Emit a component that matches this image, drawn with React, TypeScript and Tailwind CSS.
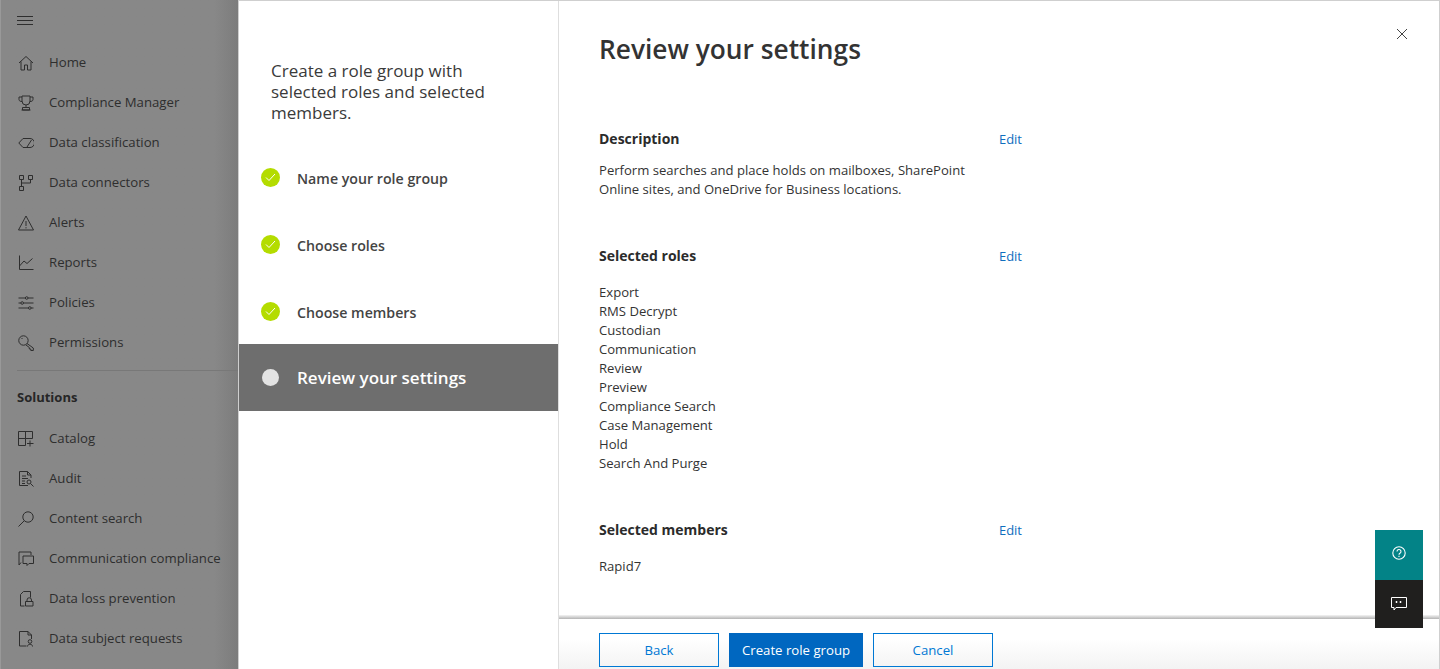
import React from "react";

const font = "font-['Open_Sans','Noto_Sans',sans-serif]";

type IconProps = { children: React.ReactNode };

function NavIcon({ children }: IconProps) {
  return (
    <svg width="16" height="16" viewBox="0 0 16 16" fill="none" stroke="currentColor" strokeWidth="1" className="shrink-0">
      {children}
    </svg>
  );
}

const navTop = [
  { label: "Home", icon: <path d="M1 8 8 1.500 15 8M3 6.500V15h3.500v-5h3v5H13V6.500" /> },
  {
    label: "Compliance Manager",
    icon: (
      <path d="M4 1h8v5a4 4 0 0 1-8 0V1ZM4 2H1v2.500C1 6 2.500 6.500 4 6.500M12 2h3v2.500c0 1.500-1.500 2-3 2M8 10v2.500M4.500 15v-2.500h7V15ZM3.500 15h9" />
    ),
  },
  {
    label: "Data classification",
    icon: <path d="M.8 8 5 3.500h7a3.500 3.500 0 0 1 0 9H5L.8 8ZM9 12l4.500-7" />,
  },
  {
    label: "Data connectors",
    icon: (
      <path d="M1.500.5h4v4h-4ZM10.500.5h4v4h-4ZM1.500 11.500h4v4h-4ZM3.500 4.500v7M3.500 8h9V4.500" />
    ),
  },
  {
    label: "Alerts",
    icon: <path d="M8 1 15.500 15H.5L8 1ZM8 6v5M8 12.200v1.200" />,
  },
  { label: "Reports", icon: <path d="M1.500.5v14h14M1.500 11 6 6l3 2.500 5.500-5" /> },
  {
    label: "Policies",
    icon: (
      <g>
        <path d="M.5 3h7M10 3h5.500M.5 8h2.500M5.500 8h10M.5 13h10M13 13h2.500" />
        <circle cx="8.700" cy="3" r="1.300" />
        <circle cx="4.200" cy="8" r="1.300" />
        <circle cx="11.800" cy="13" r="1.300" />
      </g>
    ),
  },
  {
    label: "Permissions",
    icon: <path d="M5.500.8a4.700 4.700 0 1 1-.1 9.400 4.700 4.700 0 0 1 .1-9.400ZM9 8.500l6.300 4.500v2.500h-2.500v-1.500h-1.500v-1.500L8 10M3.500 3.500h1" />,
  },
];

const navSolutions = [
  {
    label: "Catalog",
    icon: <path d="M.5.5h14v7h-7v7h-7ZM7.500.5v7M.5 7.500h7M12 9.500v6M9 12.500h6.500" />,
  },
  {
    label: "Audit",
    icon: (
      <g>
        <path d="M10 14.500H1.500V.5h8l3.500 3.500v3M9.500.5V4H13M4 5h4M4 7.500h6M4 10h3M4 12.500h3" />
        <circle cx="11" cy="11" r="2" />
        <path d="m12.500 12.500 3 3" />
      </g>
    ),
  },
  {
    label: "Content search",
    icon: (
      <g>
        <circle cx="10" cy="6" r="5.200" />
        <path d="M6.300 9.700.5 15.500" />
      </g>
    ),
  },
  {
    label: "Communication compliance",
    icon: <path d="M1 11V1h12v3M5 5h10.500v7.500H11l-2 2v-2H5ZM1 11v3l2-2.500" />,
  },
  {
    label: "Data loss prevention",
    icon: <path d="M6.500 15H2.500V3.500L5.500.5h7v6M7.500 10.500h7.500V15H7.500ZM9 10.500V9a2.200 2.200 0 0 1 4.500 0v1.500" />,
  },
  {
    label: "Data subject requests",
    icon: (
      <g>
        <path d="M8.500 15H1.500V.5H10L13.500 4v4M10 .5V4h3.500" />
        <circle cx="12" cy="10.500" r="1.800" />
        <path d="M9.500 15.500c0-3 5-3 5 0" />
      </g>
    ),
  },
];

function NavRow({ label, icon }: { label: string; icon: React.ReactNode }) {
  return (
    <div className="flex h-10 items-center gap-[15px] pl-[17px] text-[#2e2e2e]">
      <NavIcon>{icon}</NavIcon>
      <span className="whitespace-nowrap text-[13.2px]">{label}</span>
    </div>
  );
}

function Step({ label }: { label: string }) {
  return (
    <div className="flex h-[67px] items-center pl-[22px]">
      <span className="-mt-[3px] flex h-[19px] w-[19px] items-center justify-center rounded-full bg-[#b4dc00]">
        <svg width="11" height="9" viewBox="0 0 11 9" fill="none" stroke="#fff" strokeWidth="1">
          <path d="M1 4.500 4 7.500 10 1" />
        </svg>
      </span>
      <span className="ml-[17px] text-[14.2px] font-semibold text-[#444]">{label}</span>
    </div>
  );
}

function Section({ title, children }: { title: string; children: React.ReactNode }) {
  return (
    <section>
      <div className="flex h-5 w-[423px] items-center justify-between">
        <h2 className="text-sm font-bold text-[#2b2b2b]">{title}</h2>
        <a className="pt-px text-[13px] text-[#106ebe]">Edit</a>
      </div>
      {children}
    </section>
  );
}

const roles = [
  "Export",
  "RMS Decrypt",
  "Custodian",
  "Communication",
  "Review",
  "Preview",
  "Compliance Search",
  "Case Management",
  "Hold",
  "Search And Purge",
];

export default function App() {
  return (
    <div className={`relative flex h-[669px] w-[1440px] overflow-hidden bg-white ${font}`}>
      {/* dimmed nav behind the panel */}
      <aside className="h-full w-[238px] shrink-0 border-l border-[#999] bg-gradient-to-r from-[#888] from-[90%] to-[#7c7c7c]">
        <div className="flex h-[43px] items-center pb-[2px] pl-4 text-[#2e2e2e]">
          <svg width="16" height="10" viewBox="0 0 16 10" stroke="currentColor" strokeWidth="1">
            <path d="M0 .5h16M0 4.500h16M0 8.500h16" />
          </svg>
        </div>
        {navTop.map((n) => (
          <NavRow key={n.label} {...n} />
        ))}
        <div className="ml-4 mt-[7px] border-t border-[#787878]" />
        <div className="flex h-[46px] items-center pl-4 pt-2 text-[13px] font-bold text-[#262626]">Solutions</div>
        <div className="mt-[2px]">
          {navSolutions.map((n) => (
            <NavRow key={n.label} {...n} />
          ))}
        </div>
      </aside>

      {/* wizard panel */}
      <div className="flex h-full flex-1 border-r border-t border-l border-[#cfcfcf]">
        <div className="h-full w-[320px] shrink-0 border-r border-[#dedede]">
          <p className="w-[240px] pl-8 pt-[59px] text-[17px] leading-[21px] text-[#3a3a3a] box-content">
            Create a role group with selected roles and selected members.
          </p>
          <div className="mt-[22px]">
            <Step label="Name your role group" />
            <Step label="Choose roles" />
            <Step label="Choose members" />
            <div className="-mt-[2px] flex h-[67px] items-center bg-[#6e6e6e] pl-[23px]">
              <span className="h-[17px] w-[17px] rounded-full bg-[#e3e3e3]" />
              <span className="ml-[18px] text-[17px] font-semibold text-white">Review your settings</span>
            </div>
          </div>
        </div>

        <div className="flex h-full min-w-0 flex-1 flex-col">
          <main className="min-h-0 flex-1 overflow-hidden pl-10">
            <h1 className="pt-[30px] text-[26.3px] font-semibold leading-9 text-[#333]">Review your settings</h1>
            <div className="mt-[62px]">
              <Section title="Description">
                <p className="mt-3 w-[380px] text-[13.1px] leading-[19px] text-[#333]">
                  Perform searches and place holds on mailboxes, SharePoint Online sites, and OneDrive for Business locations.
                </p>
              </Section>
            </div>
            <div className="mt-[47px]">
              <Section title="Selected roles">
                <ul className="mt-[17px] text-[13.1px] leading-[19px] text-[#333]">
                  {roles.map((r) => (
                    <li key={r}>{r}</li>
                  ))}
                </ul>
              </Section>
            </div>
            <div className="mt-[47px]">
              <Section title="Selected members">
                <p className="mt-[17px] text-[13.1px] leading-[19px] text-[#333]">Rapid7</p>
              </Section>
            </div>
          </main>
          <div className="h-1 shrink-0 bg-gradient-to-b from-[#f4f4f4] to-[#b4b4b4]" />
          <footer className="flex h-[50px] shrink-0 gap-[10px] bg-gradient-to-b from-white from-40% to-[#f3f3f3] pl-10 pt-[14px]">
            <button className="h-[34px] w-[120px] border border-[#0078d4] pt-px text-[13.2px] text-[#0078d4]">Back</button>
            <button className="h-[34px] w-[134px] bg-[#0067c0] pt-px text-[13.2px] text-white">Create role group</button>
            <button className="h-[34px] w-[120px] border border-[#0078d4] pt-px text-[13.2px] text-[#0078d4]">Cancel</button>
          </footer>
        </div>
      </div>

      {/* close */}
      <button className="absolute left-[1397px] top-[29px] text-[#444]">
        <svg width="10" height="10" viewBox="0 0 10 10" stroke="currentColor" strokeWidth="1" className="block">
          <path d="m0 0 10 10M10 0 0 10" />
        </svg>
      </button>

      {/* help + feedback buttons */}
      <div className="absolute left-[1375px] top-[530px] w-12">
        <div className="flex h-[50px] items-center justify-center bg-[#038387] pb-1">
          <svg width="14" height="14" viewBox="0 0 14 14" fill="none" stroke="#fff" strokeWidth="1.100">
            <circle cx="7" cy="7" r="6.200" />
            <path d="M5 5.500a2 2 0 1 1 3 1.700c-.7.400-1 .8-1 1.500M7 9.800v1.200" />
          </svg>
        </div>
        <div className="flex h-12 items-center justify-center bg-[#201f1e]">
          <svg width="16" height="14" viewBox="0 0 16 14" fill="none" stroke="#fff" strokeWidth="1">
            <path d="M.5.500h15v10H5l-2 2.500v-2.500H.5Z" />
            <path d="M5.500 4v2M9.500 4v2" strokeWidth="1.500" />
          </svg>
        </div>
      </div>
    </div>
  );
}
